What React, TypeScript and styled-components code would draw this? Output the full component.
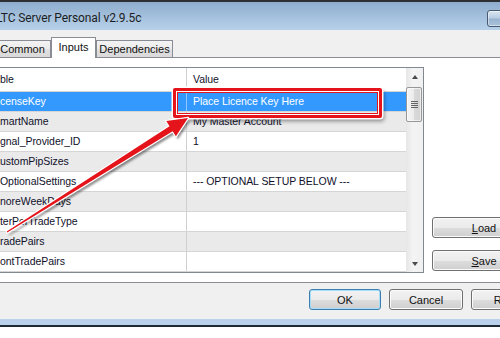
import styled, { createGlobalStyle } from "styled-components";

const ROWS = [
  { name: "censeKey", value: "Place Licence Key Here" },
  { name: "martName", value: "My Master Account" },
  { name: "gnal_Provider_ID", value: "1" },
  { name: "ustomPipSizes", value: "" },
  { name: "OptionalSettings", value: "--- OPTIONAL SETUP BELOW ---" },
  { name: "noreWeekDays", value: "" },
  { name: "terPerTradeType", value: "" },
  { name: "radePairs", value: "" },
  { name: "ontTradePairs", value: "" },
];

const TABS = [
  { label: "Common", width: 57, offset: -6 },
  { label: "Inputs", width: 45, active: true },
  { label: "Dependencies", width: 77 },
];

export default function App() {
  return (
    <>
      <GlobalStyle />
      <Window>
        <TopEdge />
        <TitleBar>
          <Title>LTC Server Personal v2.9.5c</Title>
          <CloseButton />
        </TitleBar>
        <Body>
          <TabStrip>
            {TABS.map((tab) => (
              <Tab
                key={tab.label}
                $width={tab.width}
                $offset={tab.offset ?? 0}
                $active={tab.active}
              >
                {tab.label}
              </Tab>
            ))}
          </TabStrip>
          <Panel>
            <TableBox>
              <List>
                <HeaderRow>
                  <NameCell>ble</NameCell>
                  <ValueCell>Value</ValueCell>
                </HeaderRow>
                {ROWS.map((row, i) => (
                  <Row key={row.name} $selected={i === 0} $alt={i % 2 === 1}>
                    <NameCell $selected={i === 0}>{row.name}</NameCell>
                    <ValueCell>{row.value}</ValueCell>
                  </Row>
                ))}
              </List>
              <ScrollBar>
                <ScrollArrow>
                  <ArrowGlyph $up />
                </ScrollArrow>
                <Thumb>
                  <Grip />
                  <Grip />
                  <Grip />
                  <Grip />
                </Thumb>
                <ScrollSpacer />
                <ScrollArrow>
                  <ArrowGlyph />
                </ScrollArrow>
              </ScrollBar>
            </TableBox>
            <SideColumn>
              <Button $width={104}>
                <u>L</u>oad
              </Button>
              <Button $width={104}>
                <u>S</u>ave
              </Button>
            </SideColumn>
          </Panel>
          <Footer>
            <Button $width={72} $default>
              OK
            </Button>
            <Button $width={74}>Cancel</Button>
            <Button $width={74}>Reset</Button>
          </Footer>
        </Body>
        <BottomBand />
        <BottomEdge />

        <Highlight />
        <ArrowSvg width="500" height="327" viewBox="0 0 500 327">
          <defs>
            <filter id="soft" x="-10%" y="-10%" width="120%" height="120%">
              <feGaussianBlur stdDeviation="1.3" />
            </filter>
          </defs>
          <polygon
            points="6.7,231.6 169.5,126.2 166.3,121.1 188,118 175.9,136.3 172.7,131.2 7.3,232.4"
            transform="translate(2,3)"
            fill="rgba(0,0,0,0.45)"
            filter="url(#soft)"
          />
          <polygon
            points="6.7,231.6 169.5,126.2 166.3,121.1 188,118 175.9,136.3 172.7,131.2 7.3,232.4"
            fill="#e5141b"
            stroke="#ffffff"
            strokeWidth="2.4"
            strokeLinejoin="round"
            paintOrder="stroke"
          />
        </ArrowSvg>
      </Window>
    </>
  );
}

const GlobalStyle = createGlobalStyle`
  html, body {
    margin: 0;
    padding: 0;
    background: #ffffff;
    overflow: hidden;
  }
  body {
    font-family: "Liberation Sans", Arial, sans-serif;
  }
`;

const Window = styled.div`
  position: relative;
  width: 500px;
  height: 327px;
  overflow: hidden;
  display: flex;
  flex-direction: column;
`;

const TopEdge = styled.div`
  height: 2px;
  background: #2d2f33;
`;

const TitleBar = styled.div`
  height: 28px;
  box-sizing: border-box;
  display: flex;
  align-items: flex-end;
  justify-content: space-between;
  padding-bottom: 3px;
  background: linear-gradient(#8eadcd, #b8d1ea);
`;

const Title = styled.div`
  margin-left: -4px;
  font-family: Roboto, "Liberation Sans", sans-serif;
  font-size: 12px;
  letter-spacing: -0.1px;
  line-height: 17px;
  color: #1b1d22;
`;

const CloseButton = styled.div`
  width: 40px;
  height: 17px;
  margin-right: -27px;
  box-sizing: border-box;
  border: 1px solid #4a5a70;
  border-radius: 3px;
  background: linear-gradient(#d9e5f1 0%, #b8cce1 48%, #98b3cf 52%, #aac3dc 100%);
  box-shadow: inset 0 0 0 1px rgba(255, 255, 255, 0.45);
`;

const Body = styled.div`
  height: 289px;
  background: #f0f0f0;
  display: flex;
  flex-direction: column;
`;

const TabStrip = styled.div`
  height: 27px;
  display: flex;
  align-items: flex-end;
  position: relative;
  z-index: 1;
`;

const Tab = styled.div<{ $width: number; $offset: number; $active?: boolean }>`
  width: ${({ $width }) => $width}px;
  height: ${({ $active }) => ($active ? 21 : 17)}px;
  margin-left: ${({ $offset }) => $offset}px;
  margin-bottom: ${({ $active }) => ($active ? -1 : 0)}px;
  box-sizing: border-box;
  border: 1px solid #898c95;
  border-bottom: none;
  background: ${({ $active }) =>
    $active
      ? "#ffffff"
      : "linear-gradient(#f3f3f3 0%, #ebebeb 50%, #e1e1e1 51%, #d9d9d9 100%)"};
  font-size: 11px;
  line-height: ${({ $active }) => ($active ? 18 : 16)}px;
  text-align: center;
  color: #111;
`;

const Panel = styled.div`
  height: 226px;
  box-sizing: border-box;
  border-top: 1px solid #898c95;
  border-bottom: 1px solid #898c95;
  background: #ffffff;
  display: flex;
  padding: 9px 0;
`;

const TableBox = styled.div`
  margin-left: -2px;
  width: 426px;
  flex-shrink: 0;
  box-sizing: border-box;
  border: 1px solid #828790;
  display: flex;
  overflow: hidden;
  background: #ffffff;
`;

const List = styled.div`
  flex: 1;
  display: flex;
  flex-direction: column;
  overflow: hidden;
  font-size: 10.5px;
  letter-spacing: -0.05px;
  color: #10102a;
`;

const HeaderRow = styled.div`
  display: grid;
  grid-template-columns: 188px 1fr;
  height: 24px;
  flex-shrink: 0;
  box-sizing: border-box;
  border-bottom: 1px solid #d5d5d5;
  line-height: 23px;
`;

const Row = styled.div<{ $selected?: boolean; $alt?: boolean }>`
  display: grid;
  grid-template-columns: 188px 1fr;
  height: 20px;
  flex-shrink: 0;
  box-sizing: border-box;
  border-bottom: 1px solid #d5d5d5;
  line-height: 19px;
  background: ${({ $selected, $alt }) =>
    $selected ? "#3399ff" : $alt ? "#eaeaea" : "#ffffff"};
  color: ${({ $selected }) => ($selected ? "#ffffff" : "inherit")};
`;

const NameCell = styled.div<{ $selected?: boolean }>`
  padding-left: 1px;
  border-right: 1px solid
    ${({ $selected }) => ($selected ? "rgba(255, 255, 255, 0.45)" : "#d0d0d0")};
  white-space: nowrap;
  overflow: hidden;
`;

const ValueCell = styled.div`
  padding-left: 6px;
  white-space: nowrap;
  overflow: hidden;
`;

const ScrollBar = styled.div`
  width: 17px;
  flex-shrink: 0;
  display: flex;
  flex-direction: column;
  background: linear-gradient(to right, #e6e6e6, #f4f4f4 40%, #f0f0f0);
`;

const ScrollArrow = styled.div`
  height: 17px;
  flex-shrink: 0;
  display: flex;
  align-items: center;
  justify-content: center;
`;

const ArrowGlyph = styled.div<{ $up?: boolean }>`
  width: 0;
  height: 0;
  border-left: 3.5px solid transparent;
  border-right: 3.5px solid transparent;
  ${({ $up }) =>
    $up ? "border-bottom: 4px solid #4a4a4a;" : "border-top: 4px solid #4a4a4a;"}
`;

const Thumb = styled.div`
  margin: 2px 1px 0 0;
  height: 35px;
  box-sizing: border-box;
  border: 1px solid #979797;
  border-radius: 2px;
  background: linear-gradient(to right, #f5f5f5 0%, #ebebeb 50%, #dadada 51%, #d2d2d2 100%);
  box-shadow: inset 0 0 0 1px rgba(255, 255, 255, 0.6);
  display: flex;
  flex-direction: column;
  align-items: center;
  justify-content: center;
  gap: 1px;
`;

const Grip = styled.div`
  width: 7px;
  height: 1px;
  background: #666;
`;

const ScrollSpacer = styled.div`
  flex: 1;
`;

const SideColumn = styled.div`
  margin-left: 8px;
  display: flex;
  flex-direction: column;
  justify-content: flex-end;
  gap: 12px;
  padding-bottom: 2px;
`;

const Button = styled.button<{ $width: number; $default?: boolean }>`
  width: ${({ $width }) => $width}px;
  height: 21px;
  flex-shrink: 0;
  padding: 0;
  box-sizing: border-box;
  border: 1px solid ${({ $default }) => ($default ? "#3c7fb1" : "#707070")};
  border-radius: 3px;
  background: linear-gradient(#f2f2f2 0%, #ebebeb 50%, #dddddd 51%, #cfcfcf 100%);
  box-shadow: inset 0 0 0 1px ${({ $default }) => ($default ? "#a6dcf5" : "#fbfbfb")};
  font-family: "Liberation Sans", Arial, sans-serif;
  font-size: 11px;
  color: #111;
`;

const Footer = styled.div`
  height: 36px;
  box-sizing: border-box;
  margin-right: -45px;
  padding-top: 6px;
  display: flex;
  justify-content: flex-end;
  align-items: flex-start;
  gap: 8px;
`;

const BottomBand = styled.div`
  height: 6px;
  background: #b9d1ea;
`;

const BottomEdge = styled.div`
  height: 2px;
  background: #1c2b33;
`;

const Highlight = styled.div`
  position: absolute;
  left: 173px;
  top: 88px;
  width: 209px;
  height: 30px;
  box-sizing: border-box;
  border: 3px solid #e5141b;
  border-radius: 2px;
  box-shadow: inset 0 0 0 1px #ffffff, inset 0 0 0 2px #e5141b,
    0 0 0 1.5px #ffffff, 2px 3px 4px rgba(0, 0, 0, 0.45);
  z-index: 2;
`;

const ArrowSvg = styled.svg`
  position: absolute;
  left: 0;
  top: 0;
  pointer-events: none;
  z-index: 3;
`;
